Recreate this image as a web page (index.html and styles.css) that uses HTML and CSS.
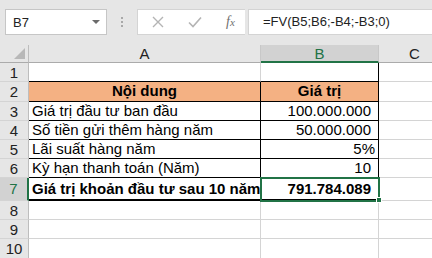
FILE: index.html
```html
<!DOCTYPE html>
<html>
<head>
<meta charset="utf-8">
<link rel="stylesheet" href="styles.css">
</head>
<body>
<div class="toolbar">
  <div class="namebox"><span>B7</span><span class="caret"></span></div>
  <div class="dots"><i></i><i></i><i></i></div>
  <div class="fxgroup">
    <svg class="ico-x" width="12" height="12" viewBox="0 0 12 12"><path d="M1 1L11 11M11 1L1 11" stroke="#b4b4b4" stroke-width="1.4" fill="none"/></svg>
    <svg class="ico-ok" width="14" height="12" viewBox="0 0 14 12"><path d="M1 6.5L5 10.5L13 1.5" stroke="#b4b4b4" stroke-width="1.6" fill="none"/></svg>
    <span class="fx">f<span class="fxx">x</span></span>
  </div>
  <div class="formula">=FV(B5;B6;-B4;-B3;0)</div>
</div>
<div class="sheet">
  <div class="corner"><span class="tri"></span></div>
  <div class="ch">A</div>
  <div class="ch sel">B</div>
  <div class="ch">C</div>

  <div class="rh">1</div><div class="c tb-bottom"></div><div class="c tb-bottom tb-right"></div><div class="c"></div>

  <div class="rh">2</div><div class="c tbl fill bold center">Nội dung</div><div class="c tbl fill bold center tb-right">Giá trị</div><div class="c"></div>

  <div class="rh">3</div><div class="c tbl">Giá trị đầu tư ban đầu</div><div class="c tbl num sp tb-right">100.000.000</div><div class="c"></div>

  <div class="rh">4</div><div class="c tbl">Số tiền gửi thêm hàng năm</div><div class="c tbl num sp tb-right">50.000.000</div><div class="c"></div>

  <div class="rh">5</div><div class="c tbl">Lãi suất hàng năm</div><div class="c tbl num tb-right">5%</div><div class="c"></div>

  <div class="rh">6</div><div class="c tbl">Kỳ hạn thanh toán (Năm)</div><div class="c tbl num sp tb-right">10</div><div class="c"></div>

  <div class="rh rsel">7</div><div class="c tbl thick bold">Giá trị khoản đầu tư sau 10 năm</div><div class="c tbl thick num sp bold active"><span class="handle"></span>791.784.089</div><div class="c"></div>

  <div class="rh">8</div><div class="c"></div><div class="c"></div><div class="c"></div>
  <div class="rh">9</div><div class="c"></div><div class="c"></div><div class="c"></div>
  <div class="rh">10</div><div class="c"></div><div class="c"></div><div class="c"></div>
</div>
</body>
</html>
```

FILE: styles.css
```css
* { box-sizing: border-box; }
html, body { margin: 0; padding: 0; }
body {
  width: 432px;
  height: 258px;
  overflow: hidden;
  background: #e6e6e6;
  font-family: "Liberation Sans", Arial, sans-serif;
  color: #000;
}
.toolbar {
  height: 45px;
  display: flex;
  align-items: flex-start;
  padding: 9px 0 0 5px;
}
.namebox {
  width: 102px;
  height: 26px;
  background: #fff;
  border: 1px solid #c6c6c6;
  display: flex;
  align-items: center;
  justify-content: space-between;
  padding: 0 6px 0 7px;
  font-size: 13px;
  color: #222;
}
.caret {
  width: 0; height: 0;
  border-left: 4px solid transparent;
  border-right: 4px solid transparent;
  border-top: 4px solid #6b6b6b;
}
.dots {
  width: 30px;
  height: 26px;
  display: flex;
  flex-direction: column;
  align-items: center;
  justify-content: center;
  gap: 2px;
}
.dots i { display: block; width: 2px; height: 2px; background: #a8a8a8; }
.fxgroup {
  width: 108px;
  height: 26px;
  background: #fff;
  border: 1px solid #d4d4d4;
  border-right: none;
  display: flex;
  align-items: center;
  padding-left: 14px;
}
.ico-x { margin-right: 24px; }
.ico-ok { margin-right: 24px; }
.fx {
  font-family: "Liberation Serif", "Times New Roman", serif;
  font-style: italic;
  font-size: 14px;
  color: #707070;
}
.fxx { font-size: 11px; }
.formula {
  flex: 1;
  height: 26px;
  margin-left: 3px;
  background: #fff;
  border: 1px solid #d4d4d4;
  border-right: none;
  font-size: 13px;
  line-height: 24px;
  padding-left: 14px;
  color: #222;
}
.sheet {
  display: grid;
  grid-template-columns: 29px 232px 118px 72px;
  grid-template-rows: 18px 19px 20px 19px 19px 19px 19px 23px 19px 19px 20px;
  background: #fff;
}
.corner {
  background: #e6e6e6;
  border-right: 1px solid #bdbdbd;
  border-bottom: 1px solid #ababab;
  position: relative;
}
.tri {
  position: absolute;
  right: 3px; bottom: 3px;
  width: 0; height: 0;
  border-left: 11px solid transparent;
  border-bottom: 11px solid #b8b8b8;
}
.ch {
  background: #e6e6e6;
  border-right: 1px solid #c8c8c8;
  border-bottom: 1px solid #ababab;
  font-size: 15px;
  text-align: center;
  line-height: 18px;
  color: #222;
}
.ch.sel {
  background: #d2d2d2;
  color: #217346;
  border-bottom: 2px solid #217346;
  border-right: 1px solid #c8c8c8;
}
.rh {
  background: #e6e6e6;
  border-right: 1px solid #bdbdbd;
  border-bottom: 1px solid #d4d4d4;
  font-size: 15px;
  text-align: center;
  line-height: 19px;
  color: #222;
}
.rh.rsel {
  background: #d2d2d2;
  color: #217346;
  border-right: 2px solid #217346;
  line-height: 22px;
}
.c {
  border-right: 1px solid #d4d4d4;
  border-bottom: 1px solid #d4d4d4;
  font-size: 15px;
  line-height: 18px;
  padding: 0 3px;
  white-space: nowrap;
  overflow: visible;
  position: relative;
}
.tbl { border-bottom: 1px solid #000; border-right: 1px solid #000; }
.tb-bottom { border-bottom: 1px solid #000; }
.tb-right { border-right: 1px solid #000; }
.fill { background: #f4b183; }
.bold { font-weight: bold; }
.center { text-align: center; }
.num { text-align: right; }
.num.sp { padding-right: 7px; }
.thick { border-bottom: 2px solid #000; line-height: 21px; }
.active {
  outline: 2px solid #217346;
  outline-offset: -1px;
  z-index: 2;
}
.handle {
  position: absolute;
  right: -4px;
  bottom: -4px;
  width: 6px;
  height: 6px;
  background: #217346;
  border: 1px solid #fff;
}
```
